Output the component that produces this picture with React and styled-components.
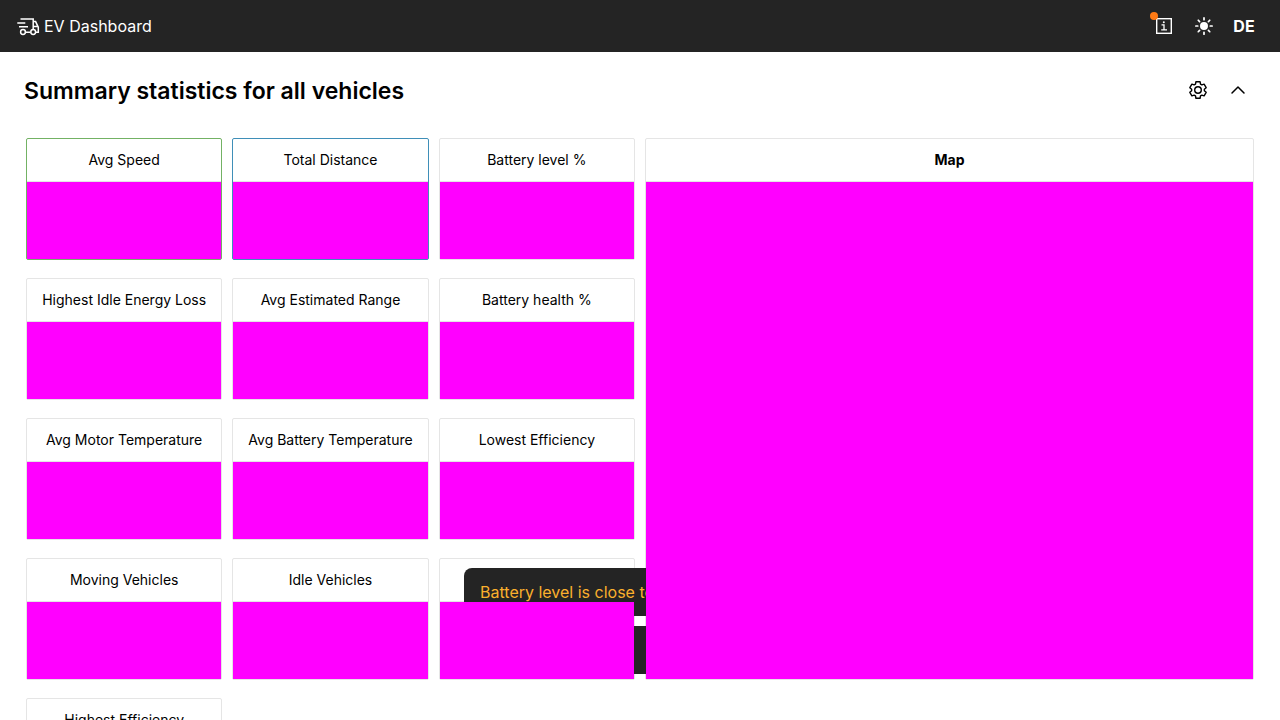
import React from "react";
import styled, { createGlobalStyle } from "styled-components";
import { IoSunny } from "react-icons/io5";
import { ChevronUp } from "lucide-react";

const colors = { dark: "#242424", line: "#e5e5e5", speed: "#73b264", distance: "#3f8fb8" };

const GlobalStyle = createGlobalStyle`
  * { box-sizing: border-box; }
  body { margin: 0; background: #fff; color: #000; font-family: Inter, "Liberation Sans", sans-serif; font-size: 16px; }
  h1, h2, h3 { margin: 0; }
`;

const TopBar = styled.header`
  display: flex; align-items: center; justify-content: space-between;
  height: 52px; padding: 0 16px; background: ${colors.dark}; color: #fff;
`;
const Brand = styled.a`
  display: flex; align-items: center; gap: 4px; color: inherit; text-decoration: none; line-height: 24px;
`;
const Actions = styled.nav`display: flex; align-items: center;`;
const IconButton = styled.button`
  position: relative; display: flex; align-items: center; justify-content: center;
  width: 40px; height: 40px; padding: 0; border: 0; background: none; color: inherit;
  font: inherit; font-weight: ${(p) => (p.$bold ? 700 : 400)}; cursor: pointer;
`;
const Dot = styled.span`
  position: absolute; top: 6px; left: 6px; width: 8px; height: 8px; border-radius: 50%; background: #ff7a14;
`;
const Summary = styled.main`
  height: calc(100vh - 52px); padding: 18px 24px; overflow-y: auto; scrollbar-width: none;
`;
const Heading = styled.div`
  display: flex; align-items: center; justify-content: space-between; height: 40px; margin-bottom: 28px;
`;
const Title = styled.h1`padding-top: 2px; font-size: 23px; line-height: 32px; font-weight: 600;`;
const Controls = styled.div`display: flex; margin-right: -2px;`;
const Board = styled.div`
  display: grid; grid-template-columns: minmax(0, 1fr) minmax(0, 1fr); gap: 10px; align-items: start; padding: 0 2px;
`;
const Tiles = styled.div`display: grid; grid-template-columns: repeat(3, minmax(0, 1fr)); gap: 18px 10px;`;
const Tile = styled.section`
  display: flex; flex-direction: column; height: ${(p) => (p.$tall ? 542 : 122)}px;
  border: 1px solid ${(p) => p.$accent || colors.line}; border-radius: 2px;
`;
const TileTitle = styled.h2`
  height: 43px; border-bottom: 1px solid ${colors.line}; text-align: center;
  font-size: 14px; line-height: 42px; font-weight: ${(p) => (p.$bold ? 700 : 400)};
`;
const TileBody = styled.div`position: relative; z-index: 2; flex: 1; background: #f0f;`;
const Toasts = styled.div`
  position: fixed; z-index: 1; bottom: 46px; left: 50%; transform: translateX(-50%);
  display: flex; flex-direction: column; gap: 10px; width: 352px;
`;
const Toast = styled.div`
  height: 48px; padding: 12px 16px; border-radius: 8px; background: ${colors.dark}; color: #fbb02d;
  line-height: 24px; white-space: nowrap; overflow: hidden;
`;

const TruckIcon = () => (
  <svg width="24" height="24" viewBox="0 0 24 24" fill="none" stroke="currentColor" strokeWidth="1.5" aria-hidden="true">
    <path d="M4.5 5H17.2V15.4M1.3 9H9.3M3 12.7H12M9.6 18.3H14.4M17.5 7.6H19.6L21.4 11.4L22.3 13.2V18.3H19.6M17.5 12.6H22" />
    <circle cx="7" cy="18" r="2.4" />
    <circle cx="17.2" cy="18" r="2.4" />
  </svg>
);

const InfoIcon = () => (
  <svg width="16" height="16" viewBox="0 0 16 16" fill="none" stroke="currentColor" aria-hidden="true">
    <rect x="0.7" y="0.7" width="14.6" height="14.6" strokeWidth="1.4" />
    <path d="M5.5 6.8H8V11.8M5.2 11.9H11" strokeWidth="1.3" />
    <circle cx="7.8" cy="4.2" r="1" fill="currentColor" stroke="none" />
  </svg>
);

const polar = (radius, degrees) => {
  const a = (degrees * Math.PI) / 180;
  return `${(radius * Math.sin(a)).toFixed(2)},${(-radius * Math.cos(a)).toFixed(2)}`;
};
const gearOutline = [0, 60, 120, 180, 240, 300]
  .flatMap((a) => [polar(6.4, a - 23), polar(8.5, a - 14), polar(8.5, a + 14), polar(6.4, a + 23)])
  .join(" ");

const GearIcon = () => (
  <svg width="20" height="20" viewBox="-10 -10 20 20" fill="none" stroke="currentColor" strokeWidth="1.4" strokeLinejoin="round" aria-hidden="true">
    <polygon points={gearOutline} />
    <circle r="3.3" />
  </svg>
);

const tiles = [
  ["Avg Speed", colors.speed], ["Total Distance", colors.distance], ["Battery level %"],
  ["Highest Idle Energy Loss"], ["Avg Estimated Range"], ["Battery health %"],
  ["Avg Motor Temperature"], ["Avg Battery Temperature"], ["Lowest Efficiency"],
  ["Moving Vehicles"], ["Idle Vehicles"], [""], ["Highest Efficiency"],
];

export default function App() {
  return (
    <>
      <GlobalStyle />
      <TopBar>
        <Brand href="#"><TruckIcon />EV Dashboard</Brand>
        <Actions>
          <IconButton aria-label="Information"><InfoIcon /><Dot /></IconButton>
          <IconButton aria-label="Light theme"><IoSunny size={20} /></IconButton>
          <IconButton $bold>DE</IconButton>
        </Actions>
      </TopBar>
      <Summary>
        <Heading>
          <Title>Summary statistics for all vehicles</Title>
          <Controls>
            <IconButton aria-label="Settings"><GearIcon /></IconButton>
            <IconButton aria-label="Collapse"><ChevronUp size={24} strokeWidth={1.5} /></IconButton>
          </Controls>
        </Heading>
        <Board>
          <Tiles>
            {tiles.map(([name, accent]) => (
              <Tile key={name} $accent={accent}>
                <TileTitle>{name}</TileTitle>
                <TileBody />
              </Tile>
            ))}
          </Tiles>
          <Tile $tall>
            <TileTitle $bold>Map</TileTitle>
            <TileBody />
          </Tile>
        </Board>
      </Summary>
      <Toasts role="status">
        <Toast>Battery level is close to</Toast>
        <Toast />
      </Toasts>
    </>
  );
}
